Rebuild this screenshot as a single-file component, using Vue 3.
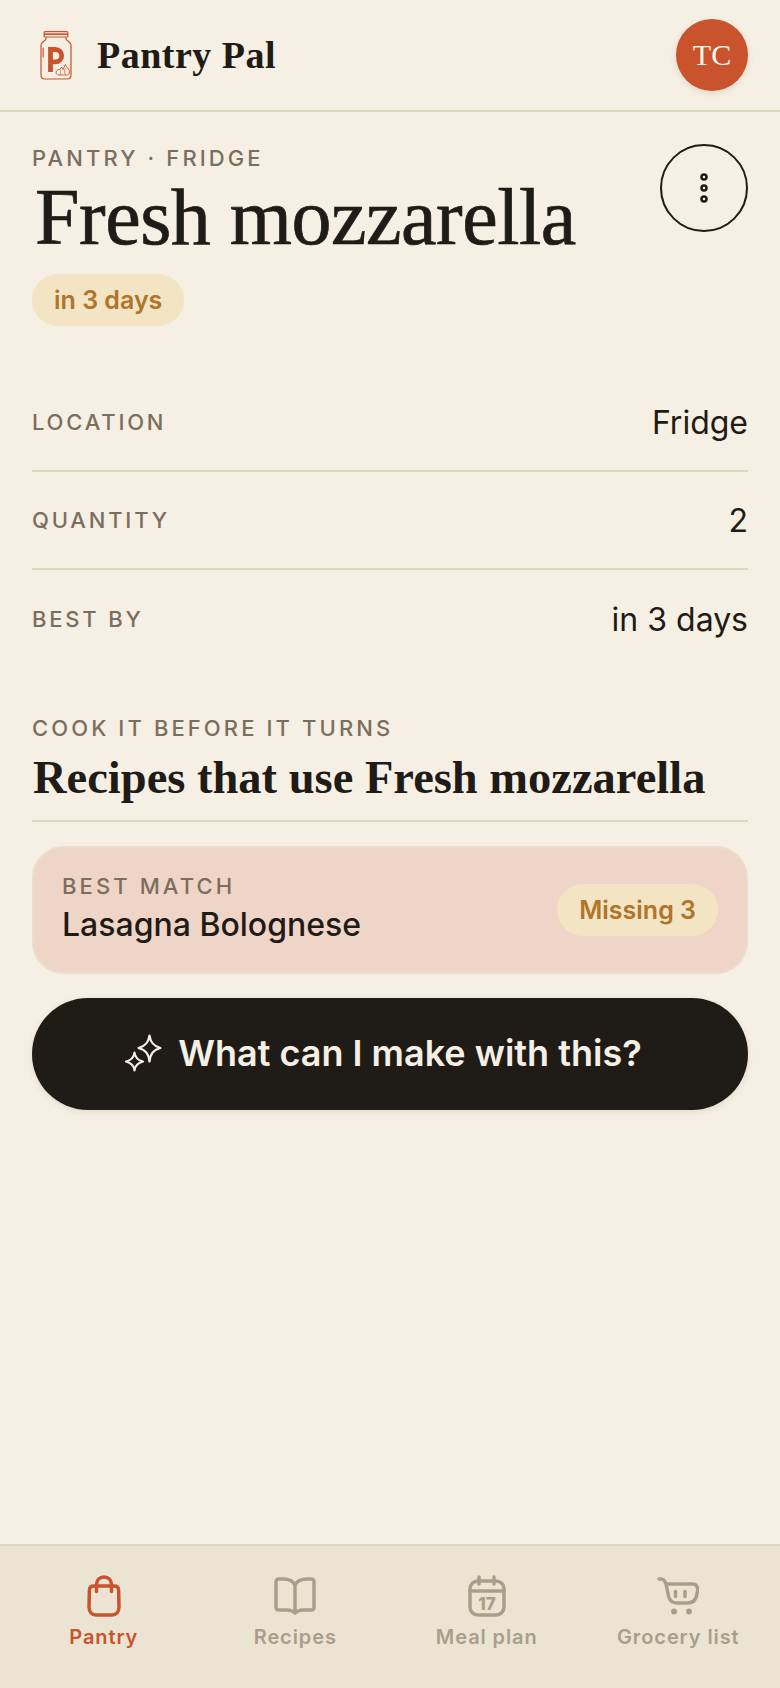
<script setup>
const rows = [
  { label: 'LOCATION', value: 'Fridge' },
  { label: 'QUANTITY', value: '2' },
  { label: 'BEST BY', value: 'in 3 days' },
]
</script>

<template>
  <div class="screen">
    <header class="topbar">
      <div class="brand">
        <svg class="jar" viewBox="0 0 32 49" fill="none" stroke="#c9532c" stroke-width="1.200">
          <rect x="4" y="0.6" width="24" height="2.6" rx="1.3" />
          <rect x="4" y="3.4" width="24" height="2.6" rx="1.3" />
          <path d="M6 6.200v1.500C6 10 1 10.500 1 14.500V44c0 2.500 1.500 4 4 4h22c2.500 0 4-1.500 4-4V14.500c0-4-5-4.500-5-6.800V6.200" />
          <path d="M3.200 17v9" stroke-linecap="round" />
          <path d="M10.500 41V18.500H15.500a6.200 6.200 0 0 1 0 12.400H11" stroke-width="4.800" />
          <path d="M16 41c1-2.500 3-3 4-2.500l1.500-2.500 1.500 2.500 2.500-5c1 3 4 4.500 4 7.500 0 1.500-1 3-3 3h-8C17 44 16 42.500 16 41z" stroke-width="0.900" fill="#f6f0e4" />
          <path d="M21 39c-1 1.500-1 3.500 0 5M25.500 37c-1 2-1 5 0 7" stroke-width="0.700" />
        </svg>
        <span class="brand-name">Pantry Pal</span>
      </div>
      <div class="avatar">TC</div>
    </header>

    <main class="content">
      <section class="hero">
        <div class="hero-text">
          <div class="eyebrow wide">PANTRY · FRIDGE</div>
          <h1>Fresh mozzarella</h1>
          <span class="chip hero-chip">in 3 days</span>
        </div>
        <button class="more">
          <svg width="10" height="30" viewBox="0 0 10 30" fill="none" stroke="#1f1b16" stroke-width="2.500">
            <circle cx="5" cy="4" r="2.500" />
            <circle cx="5" cy="15" r="2.500" />
            <circle cx="5" cy="26" r="2.500" />
          </svg>
        </button>
      </section>

      <section class="facts">
        <div v-for="row in rows" :key="row.label" class="fact">
          <span class="eyebrow">{{ row.label }}</span>
          <span class="fact-value">{{ row.value }}</span>
        </div>
      </section>

      <section class="recipes">
        <div class="eyebrow wide">COOK IT BEFORE IT TURNS</div>
        <h2>Recipes that use Fresh mozzarella</h2>
      </section>

      <div class="match">
        <div>
          <div class="eyebrow wide">BEST MATCH</div>
          <div class="match-name">Lasagna Bolognese</div>
        </div>
        <span class="chip">Missing 3</span>
      </div>

      <button class="cta">
        <svg width="38" height="38" viewBox="0 0 38 38" fill="none" stroke="#f6f0e4" stroke-width="2.200" stroke-linejoin="round">
          <path d="M25.500 1.500C26.500 8 29 12 36.500 14 29 16 26.500 20 25.500 27.500 24.500 20 22 16 14.500 14 22 12 24.500 8 25.500 1.500z" />
          <path d="M10.500 18.500C11 23 13 26 19 27.500 13 29 11 32 10.500 36.500 10 32 8 29 2 27.500 8 26 10 23 10.500 18.500z" />
        </svg>
        What can I make with this?
      </button>
    </main>

    <nav class="tabs">
      <div class="tab active">
        <svg width="34" height="42" viewBox="0 0 34 42" fill="none" stroke="currentColor" stroke-width="3.500" stroke-linecap="round" stroke-linejoin="round">
          <path d="M7 11H27C30 11 31.500 12.500 31.600 15L32 32C32 37 29 40 25 40H9C5 40 2 37 2 32L2.400 15C2.500 12.500 4 11 7 11z" />
          <path d="M9.500 16.500V10C9.500 5 12.500 2 17 2S24.500 5 24.500 10V16.500" />
        </svg>
        <span>Pantry</span>
      </div>
      <div class="tab">
        <svg width="42" height="42" viewBox="0 0 42 42" fill="none" stroke="currentColor" stroke-width="3.500" stroke-linejoin="round">
          <path d="M21 10c-2-4-6-6-12-6H5C3 4 2 5 2 7v25c0 2 1 3 3 3h8c3 0 6 1 8 3 2-2 5-3 8-3h8c2 0 3-1 3-3V7c0-2-1-3-3-3h-4c-6 0-10 2-12 6zM21 10v28" />
        </svg>
        <span>Recipes</span>
      </div>
      <div class="tab">
        <svg width="38" height="42" viewBox="0 0 38 42" fill="none" stroke="currentColor" stroke-width="3.500" stroke-linecap="round">
          <rect x="2" y="6" width="34" height="34" rx="8" />
          <path d="M2 16h34M11 2v7M26 2v7" />
          <text x="19" y="34.500" text-anchor="middle" class="day">17</text>
        </svg>
        <span>Meal plan</span>
      </div>
      <div class="tab">
        <svg width="42" height="42" viewBox="0 0 42 42" fill="none" stroke="currentColor" stroke-width="3.500" stroke-linecap="round" stroke-linejoin="round">
          <path d="M2 4h2c3 0 4 2 5 5l2.500 12c1 4.500 4 7 8.500 7h10c5 0 8.500-2.500 9.500-7l1-4.500c.7-4-1-7.500-4.500-7.500H9" />
          <path d="M18.500 16.500v5M28 16.500v5" />
          <circle cx="17" cy="36.500" r="2.200" fill="currentColor" stroke-width="1.500" />
          <circle cx="32" cy="36.500" r="2.200" fill="currentColor" stroke-width="1.500" />
        </svg>
        <span>Grocery list</span>
      </div>
    </nav>
  </div>
</template>

<style>
body {
  margin: 0;
  background: #f6f0e4;
}
</style>

<style scoped>
.screen {
  width: 780px;
  height: 1688px;
  display: flex;
  flex-direction: column;
  background: #f6f0e4;
  color: #1f1b16;
  font-family: Inter, "Noto Sans", sans-serif;
  overflow: hidden;
}

.topbar {
  height: 112px;
  box-sizing: border-box;
  padding: 0 32px 0 40px;
  display: flex;
  align-items: center;
  justify-content: space-between;
  border-bottom: 2px solid #dfd6bf;
  flex-shrink: 0;
}

.brand {
  display: flex;
  align-items: center;
  gap: 25px;
}

.jar {
  width: 32px;
  height: 49px;
}

.brand-name {
  font-family: "Liberation Serif", serif;
  font-size: 38px;
  font-weight: 700;
  letter-spacing: 0.5px;
}

.avatar {
  width: 72px;
  height: 72px;
  border-radius: 50%;
  background: #c9532c;
  color: #fff9ee;
  font-family: "Liberation Serif", serif;
  font-size: 30px;
  display: flex;
  align-items: center;
  justify-content: center;
  box-shadow: 0 2px 6px rgba(90, 60, 30, 0.15);
}

.content {
  flex: 1;
  padding: 0 32px;
}

.hero {
  display: flex;
  justify-content: space-between;
  align-items: flex-start;
  padding-top: 32px;
}

.eyebrow {
  font-size: 22px;
  line-height: 28px;
  font-weight: 500;
  letter-spacing: 2.800px;
  color: #7a6e5f;
}

.eyebrow.wide {
  letter-spacing: 3.100px;
}

h1 {
  margin: 0 0 0 3px;
  font-family: "Liberation Serif", serif;
  font-size: 80px;
  font-weight: 400;
  line-height: 90px;
  letter-spacing: -0.5px;
  -webkit-text-stroke: 0.7px #1f1b16;
}

.chip {
  display: inline-block;
  padding: 0 22px;
  height: 52px;
  line-height: 52px;
  border-radius: 26px;
  background: #f3e4c4;
  color: #b0742a;
  font-size: 25px;
  font-weight: 600;
}

.hero-chip {
  margin-top: 12px;
}

.more {
  width: 88px;
  height: 88px;
  margin-top: 0;
  padding: 0;
  border: 2px solid #1f1b16;
  border-radius: 50%;
  background: transparent;
  display: flex;
  align-items: center;
  justify-content: center;
}

.facts {
  margin-top: 48px;
}

.fact {
  height: 98px;
  display: flex;
  align-items: center;
  justify-content: space-between;
  border-bottom: 2px solid #dfd6bf;
  box-sizing: border-box;
}

.fact:last-child {
  border-bottom: none;
}

.fact-value {
  font-size: 32px;
}

.recipes {
  margin-top: 46px;
  padding-bottom: 12px;
  border-bottom: 2px solid #dfd6bf;
}

h2 {
  margin: 6px 0 0 1px;
  font-family: "Liberation Serif", serif;
  font-size: 46.500px;
  line-height: 60px;
  font-weight: 700;
}

.match {
  margin-top: 24px;
  height: 128px;
  box-sizing: border-box;
  padding: 0 28px 2px;
  border: 2px solid #ebdccc;
  border-radius: 32px;
  background: #efd5c8;
  display: flex;
  align-items: center;
  justify-content: space-between;
}

.match-name {
  font-size: 32px;
  font-weight: 500;
  line-height: 42px;
  margin-top: 4px;
}

.match .chip {
  margin-top: 2px;
}

.cta {
  width: 100%;
  height: 112px;
  margin-top: 24px;
  padding: 0 14px 2px 0;
  border: none;
  border-radius: 56px;
  background: #1f1b16;
  color: #f6f0e4;
  font-family: inherit;
  font-size: 36px;
  font-weight: 600;
  display: flex;
  align-items: center;
  justify-content: center;
  gap: 16px;
  box-shadow: 0 2px 6px rgba(90, 60, 30, 0.12);
}

.tabs {
  height: 144px;
  box-sizing: border-box;
  flex-shrink: 0;
  display: grid;
  grid-template-columns: repeat(4, 1fr);
  padding: 29px 6px 0 8px;
  background: #ece4d2;
  border-top: 2px solid #dfd6bf;
}

.tab {
  display: flex;
  flex-direction: column;
  align-items: center;
  gap: 7px;
  color: #a89e8c;
}

.tab span {
  font-size: 20px;
  line-height: 26px;
  font-weight: 600;
  letter-spacing: 0.900px;
}

.tab .day {
  fill: currentColor;
  stroke: none;
  font-family: Inter, sans-serif;
  font-size: 17px;
  font-weight: 800;
}

.tab.active {
  color: #c9532c;
}
</style>
